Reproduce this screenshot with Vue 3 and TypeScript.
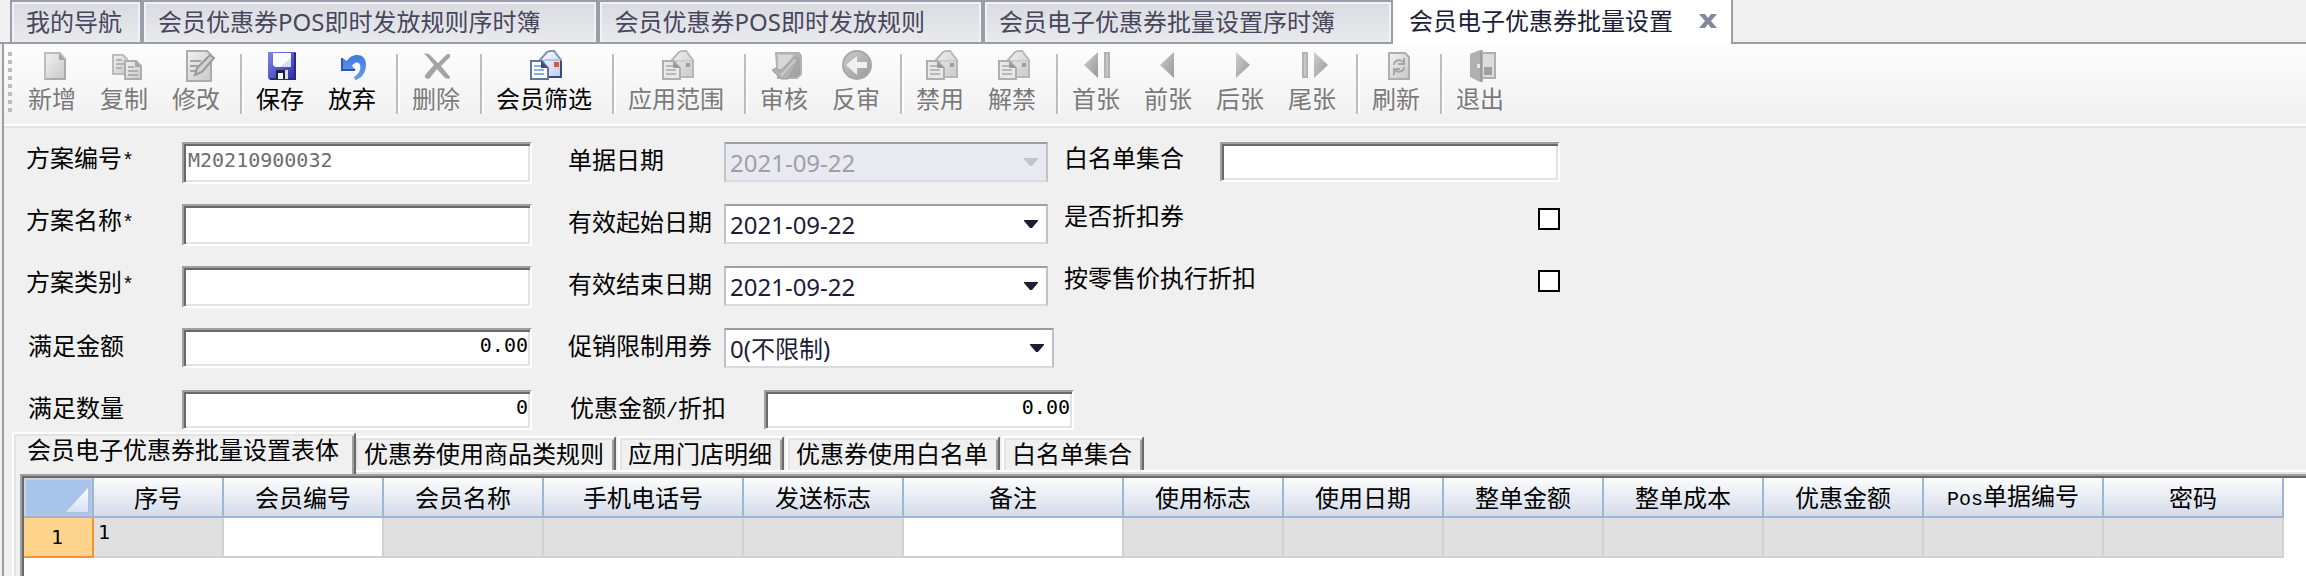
<script setup lang="ts">
import { ref } from 'vue'

type IconName =
  | 'page' | 'copy' | 'edit' | 'save' | 'undo' | 'delete' | 'mail'
  | 'approve' | 'revert' | 'first' | 'prev' | 'next' | 'last' | 'refresh' | 'exit'

interface Tool {
  label: string
  icon: IconName
  enabled?: boolean
}

interface Column {
  title: string
  width: number
  editable?: boolean
  value?: string
  code?: string
}

const documents = [
  '我的导航',
  '会员优惠券POS即时发放规则序时簿',
  '会员优惠券POS即时发放规则',
  '会员电子优惠券批量设置序时簿',
]

const toolGroups: Tool[][] = [
  [
    { label: '新增', icon: 'page' },
    { label: '复制', icon: 'copy' },
    { label: '修改', icon: 'edit' },
  ],
  [
    { label: '保存', icon: 'save', enabled: true },
    { label: '放弃', icon: 'undo', enabled: true },
  ],
  [{ label: '删除', icon: 'delete' }],
  [{ label: '会员筛选', icon: 'mail', enabled: true }],
  [{ label: '应用范围', icon: 'mail' }],
  [
    { label: '审核', icon: 'approve' },
    { label: '反审', icon: 'revert' },
  ],
  [
    { label: '禁用', icon: 'mail' },
    { label: '解禁', icon: 'mail' },
  ],
  [
    { label: '首张', icon: 'first' },
    { label: '前张', icon: 'prev' },
    { label: '后张', icon: 'next' },
    { label: '尾张', icon: 'last' },
  ],
  [{ label: '刷新', icon: 'refresh' }],
  [{ label: '退出', icon: 'exit' }],
]

const form = ref({
  code: 'M20210900032',
  name: '',
  category: '',
  amount: '0.00',
  quantity: '0',
  discount: '0.00',
  whitelist: '',
  isDiscount: false,
  byRetail: false,
})

const detailTabs = [
  '会员电子优惠券批量设置表体',
  '优惠券使用商品类规则',
  '应用门店明细',
  '优惠券使用白名单',
  '白名单集合',
]
const activeTab = ref(0)

const columns: Column[] = [
  { title: '序号', width: 130, value: '1' },
  { title: '会员编号', width: 160, editable: true },
  { title: '会员名称', width: 160 },
  { title: '手机电话号', width: 200 },
  { title: '发送标志', width: 160 },
  { title: '备注', width: 220, editable: true },
  { title: '使用标志', width: 160 },
  { title: '使用日期', width: 160 },
  { title: '整单金额', width: 160 },
  { title: '整单成本', width: 160 },
  { title: '优惠金额', width: 160 },
  { title: '单据编号', width: 180, code: 'Pos' },
  { title: '密码', width: 180 },
]
</script>

<template>
  <div class="app">
    <svg class="defs" width="0" height="0" aria-hidden="true">
      <defs>
        <linearGradient id="g-gray" x1="0" y1="0" x2="1" y2="1">
          <stop offset="0" stop-color="#f2f2f2" />
          <stop offset="1" stop-color="#c8c8c8" />
        </linearGradient>
        <linearGradient id="g-dark" x1="0" y1="0" x2="1" y2="1">
          <stop offset="0" stop-color="#cecece" />
          <stop offset="1" stop-color="#989898" />
        </linearGradient>
        <linearGradient id="g-save" x1="0" y1="0" x2="1" y2="1">
          <stop offset="0" stop-color="#7d86ee" />
          <stop offset="1" stop-color="#2f2a9c" />
        </linearGradient>
        <linearGradient id="g-mail" x1="0" y1="0" x2="1" y2="1">
          <stop offset="0" stop-color="#ffffff" />
          <stop offset="1" stop-color="#b9cdf0" />
        </linearGradient>
        <linearGradient id="g-undo" x1="0" y1="0" x2="0" y2="1">
          <stop offset="0" stop-color="#3f7ae0" />
          <stop offset="1" stop-color="#6d9df0" />
        </linearGradient>
        <linearGradient id="g-corner" x1="0" y1="0" x2="0" y2="1">
          <stop offset="0" stop-color="#ffffff" />
          <stop offset="1" stop-color="#d4e1f4" />
        </linearGradient>
      </defs>
    </svg>

    <nav class="documents">
      <button v-for="doc in documents" :key="doc" type="button" class="doc">{{ doc }}</button>
      <div class="doc current">
        <span>会员电子优惠券批量设置</span>
        <button type="button" class="close" aria-label="关闭">
          <svg width="18" height="14" viewBox="0 0 18 14">
            <path d="M0 0h6l3 4 3-4h6l-6 7 6 7h-6l-3-4-3 4H0l6-7z" fill="#85879a" />
          </svg>
        </button>
      </div>
      <div class="rest"></div>
    </nav>

    <main class="window">
      <div class="toolbar" role="toolbar">
        <span class="grip"></span>
        <div v-for="(group, g) in toolGroups" :key="g" class="group">
          <button
            v-for="tool in group"
            :key="tool.label"
            type="button"
            class="tool"
            :disabled="!tool.enabled"
          >
            <svg class="icon" width="32" height="32" viewBox="0 0 32 32" aria-hidden="true">
              <g v-if="tool.icon === 'page'">
                <path d="M7 3h15l5 6v20H7z" fill="url(#g-gray)" stroke="#bcbcbc" stroke-width="2" />
                <path d="M21 3v7h6z" fill="#a5a5a5" />
                <path d="M27 10v19H8" fill="none" stroke="#ababab" stroke-width="2" />
              </g>
              <g v-else-if="tool.icon === 'copy'">
                <path d="M3 5h10l4 4v15H3z" fill="url(#g-gray)" stroke="#bcbcbc" stroke-width="2" />
                <path d="M6 10h6M6 14h8M6 18h6" stroke="#b4b4b4" stroke-width="2" />
                <path d="M15 11h11l5 5v13H15z" fill="url(#g-gray)" stroke="#adadad" stroke-width="2" />
                <path d="M25 11v6h6z" fill="#a5a5a5" />
                <path d="M18 17h6M18 21h10M18 25h10" stroke="#b0b0b0" stroke-width="2" />
              </g>
              <g v-else-if="tool.icon === 'edit'">
                <path d="M5 1h20l4 4v26H5z" fill="url(#g-gray)" stroke="#acacac" stroke-width="2" />
                <path d="M8 11h11M8 16h8M8 21h6" stroke="#a4a4a4" stroke-width="2" />
                <path d="M28 5l4 3-12 14-7 3 2-7z" fill="#d2d2d2" stroke="#999999" stroke-width="2" />
              </g>
              <g v-else-if="tool.icon === 'save'">
                <path d="M2 2h28v28H4l-2-2z" fill="url(#g-save)" />
                <path d="M29 3v26H4" fill="none" stroke="#2c2790" stroke-width="2" />
                <path d="M7 3h18v14H9l-2-2z" fill="#fbfcff" />
                <path d="M25 8v9H14z" fill="#d5def8" />
                <path d="M10 20h12v9H10z" fill="#d9dce6" />
                <path d="M10 20h9v9h-9z" fill="#1d2438" />
                <path d="M12 23h5v6h-5z" fill="#f4f6fb" />
              </g>
              <g v-else-if="tool.icon === 'undo'">
                <path
                  d="M4 8l5 3c4-8 19-9 19 4 0 8-5 14-11 15l-1-3c6-4 7-8 6-12-1-4-6-3-8 1l4 4H4z"
                  fill="url(#g-undo)"
                />
                <path d="M4 8v12h13" fill="none" stroke="#2b55c0" stroke-width="2" />
              </g>
              <g v-else-if="tool.icon === 'delete'">
                <path
                  d="M2 3l5 1 9 9 9-9 3 0v3l-9 9 9 11-1 2-4-1-8-9-8 10-4-1 0-3 9-10z"
                  fill="#a4a4a4"
                />
              </g>
              <g v-else-if="tool.icon === 'mail' && tool.enabled">
                <path d="M9 11l8-9 3-1h4l7 9v17H9z" fill="url(#g-mail)" stroke="#7c93b8" stroke-width="2" />
                <path d="M9 11l9-1 12 0" fill="none" stroke="#b4c6e4" stroke-width="2" />
                <path d="M31 11v16H18" fill="none" stroke="#394d78" stroke-width="2" />
                <path d="M24 12h5v5h-5z" fill="#e5532b" />
                <path d="M1 11h11l6 7v11H1z" fill="#ffffff" stroke="#5f779f" stroke-width="2" />
                <path d="M11 11v7h7z" fill="#394d78" />
                <path d="M4 16h7M4 20h10M4 24h10" stroke="#8fb0e4" stroke-width="2" />
              </g>
              <g v-else-if="tool.icon === 'mail'">
                <path d="M9 11l8-9 3-1h4l7 9v17H9z" fill="url(#g-gray)" stroke="#b8b8b8" stroke-width="2" />
                <path d="M9 11h21" fill="none" stroke="#cdcdcd" stroke-width="2" />
                <path d="M24 13h4v4h-4z" fill="#9f9f9f" />
                <path d="M1 11h11l6 7v11H1z" fill="#e9e9e9" stroke="#b0b0b0" stroke-width="2" />
                <path d="M11 11v7h7z" fill="#9b9b9b" />
                <path d="M4 16h7M4 20h10M4 24h10" stroke="#b8b8b8" stroke-width="2" />
              </g>
              <g v-else-if="tool.icon === 'approve'">
                <path d="M6 3h23l2 3v18l-4 4H8z" fill="url(#g-dark)" stroke="#b2b2b2" stroke-width="2" />
                <path d="M8 5h16L13 19H8z" fill="#d8d8d8" />
                <path d="M2 20l4-2 4 3L25 7l4 2-11 20h-7z" fill="#b2b2b2" stroke="#9c9c9c" />
                <path d="M11 26L25 10" stroke="#c9c9c9" stroke-width="2" />
              </g>
              <g v-else-if="tool.icon === 'revert'">
                <circle cx="15" cy="15" r="14" fill="url(#g-dark)" stroke="#a8a8a8" stroke-width="2" />
                <path d="M4 15L15 6v6h10v6H15v7z" fill="#f0f0f0" />
              </g>
              <g v-else-if="tool.icon === 'first'">
                <path d="M16 2v26L2 15z" fill="url(#g-dark)" />
                <path d="M23 3h4v24h-4z" fill="#c8c8c8" stroke="#b2b2b2" stroke-width="2" />
              </g>
              <g v-else-if="tool.icon === 'prev'">
                <path d="M20 2v26L6 15z" fill="url(#g-dark)" />
              </g>
              <g v-else-if="tool.icon === 'next'">
                <path d="M10 2v26l14-13z" fill="url(#g-dark)" />
              </g>
              <g v-else-if="tool.icon === 'last'">
                <path d="M5 3h4v24H5z" fill="#c8c8c8" stroke="#b2b2b2" stroke-width="2" />
                <path d="M16 2v26l14-13z" fill="url(#g-dark)" />
              </g>
              <g v-else-if="tool.icon === 'refresh'">
                <path d="M7 3h16l4 4v22H7z" fill="url(#g-gray)" stroke="#afafaf" stroke-width="2" />
                <path
                  d="M12 15c0-5 6-6 9-3M22 8v6h-6M22 17c0 5-6 6-9 3M12 25v-6h6"
                  fill="none"
                  stroke="#a6a6a6"
                  stroke-width="2"
                />
              </g>
              <g v-else>
                <path d="M16 3h13v25H16z" fill="#dcdcdc" stroke="#b0b0b0" stroke-width="2" />
                <path d="M18 17h8v8h-8z" fill="#a0a0a0" />
                <path d="M4 4l10-4h3v32h-3L4 27z" fill="#b0b0b0" />
                <path d="M15 1v30" stroke="#9c9c9c" stroke-width="2" />
                <path d="M11 14h3v4h-3z" fill="#e8e8e8" />
              </g>
            </svg>
            <span>{{ tool.label }}</span>
          </button>
        </div>
      </div>

      <form class="fields" @submit.prevent>
        <div class="col first">
          <div class="row">
            <label for="code">方案编号<span class="mono">*</span></label>
            <input id="code" v-model="form.code" class="box" type="text" disabled />
          </div>
          <div class="row">
            <label for="name">方案名称<span class="mono">*</span></label>
            <input id="name" v-model="form.name" class="box" type="text" />
          </div>
          <div class="row">
            <label for="category">方案类别<span class="mono">*</span></label>
            <input id="category" v-model="form.category" class="box" type="text" />
          </div>
          <div class="row low">
            <label for="amount">满足金额</label>
            <input id="amount" v-model="form.amount" class="box number" type="text" />
          </div>
          <div class="row low">
            <label for="quantity">满足数量</label>
            <input id="quantity" v-model="form.quantity" class="box number" type="text" />
          </div>
        </div>

        <div class="col second">
          <div class="row">
            <label for="billDate">单据日期</label>
            <div class="drop">
              <select id="billDate" disabled><option>2021-09-22</option></select>
              <svg class="arrow" width="14" height="8" viewBox="0 0 14 8"><path d="M0 0h14v1L8 8H6L0 1z" /></svg>
            </div>
          </div>
          <div class="row">
            <label for="startDate">有效起始日期</label>
            <div class="drop">
              <select id="startDate"><option>2021-09-22</option></select>
              <svg class="arrow" width="14" height="8" viewBox="0 0 14 8"><path d="M0 0h14v1L8 8H6L0 1z" /></svg>
            </div>
          </div>
          <div class="row">
            <label for="endDate">有效结束日期</label>
            <div class="drop">
              <select id="endDate"><option>2021-09-22</option></select>
              <svg class="arrow" width="14" height="8" viewBox="0 0 14 8"><path d="M0 0h14v1L8 8H6L0 1z" /></svg>
            </div>
          </div>
          <div class="row">
            <label for="limit">促销限制用券</label>
            <div class="drop wide">
              <select id="limit"><option>0(不限制)</option></select>
              <svg class="arrow" width="14" height="8" viewBox="0 0 14 8"><path d="M0 0h14v1L8 8H6L0 1z" /></svg>
            </div>
          </div>
          <div class="row">
            <label for="discount" class="long">优惠金额<span class="mono">/</span>折扣</label>
            <input id="discount" v-model="form.discount" class="box number short" type="text" />
          </div>
        </div>

        <div class="col third">
          <div class="row">
            <label for="whitelist">白名单集合</label>
            <input id="whitelist" v-model="form.whitelist" class="box low-box" type="text" />
          </div>
          <div class="row check">
            <label for="isDiscount">是否折扣券</label>
            <input id="isDiscount" v-model="form.isDiscount" type="checkbox" />
          </div>
          <div class="row check">
            <label for="byRetail">按零售价执行折扣</label>
            <input id="byRetail" v-model="form.byRetail" type="checkbox" />
          </div>
        </div>
      </form>

      <section class="details">
        <div class="tabs" role="tablist">
          <button
            v-for="(tab, i) in detailTabs"
            :key="tab"
            type="button"
            role="tab"
            class="tab"
            :class="{ active: i === activeTab }"
            :aria-selected="i === activeTab"
            @click="activeTab = i"
          >
            {{ tab }}
          </button>
        </div>
        <div class="sheet" role="tabpanel">
          <div class="grid">
            <table>
              <colgroup>
                <col class="index-col" />
                <col v-for="c in columns" :key="c.title" :style="{ width: c.width + 'px' }" />
              </colgroup>
              <thead>
                <tr>
                  <th class="corner">
                    <svg width="22" height="24" viewBox="0 0 22 24" aria-hidden="true">
                      <path d="M22 0v24H0z" fill="url(#g-corner)" />
                    </svg>
                  </th>
                  <th v-for="c in columns" :key="c.title" scope="col">
                    <span v-if="c.code" class="mono">{{ c.code }}</span>{{ c.title }}
                  </th>
                </tr>
              </thead>
              <tbody>
                <tr>
                  <th scope="row" class="index">1</th>
                  <td v-for="c in columns" :key="c.title" :class="{ editable: c.editable }">{{ c.value }}</td>
                </tr>
              </tbody>
            </table>
          </div>
        </div>
      </section>
    </main>
  </div>
</template>

<style>
html,
body {
  margin: 0;
  background: #f0f0f0;
}
</style>

<style scoped>
.app {
  display: flex;
  flex-direction: column;
  min-height: 100vh;
  overflow: hidden;
  background: #f0f0f0;
  color: #000;
  font-family: "Noto Sans CJK SC", sans-serif;
  font-size: 24px;
}
.app *,
.app *::before {
  box-sizing: border-box;
}
.defs {
  position: absolute;
}
button,
input,
select {
  margin: 0;
  font: inherit;
  color: inherit;
}

/* document tabs */
.documents {
  display: flex;
  height: 44px;
  padding-left: 10px;
  color: #48465c;
  font-family: "Noto Sans", "Noto Sans CJK SC", sans-serif;
  white-space: nowrap;
  box-shadow: inset 0 -2px 0 #9b9dab;
}
.doc {
  flex: none;
  padding: 0 56px 0 14px;
  border: 2px solid #9b9dab;
  background: linear-gradient(#dadbe0, #e9eaee);
  box-shadow: inset 2px 2px 0 #f2f2f5, inset -2px 0 0 #f2f2f5;
  line-height: 40px;
  text-align: left;
}
.doc:first-child {
  padding-right: 18px;
}
.doc.current {
  display: flex;
  align-items: center;
  gap: 26px;
  padding: 0 14px 2px 16px;
  border: 0;
  background: #fff;
  box-shadow: none;
  color: #201c38;
}
.close {
  display: flex;
  padding: 0;
  border: 0;
  background: none;
}
.rest {
  flex: 1;
  border-left: 2px solid #9b9dab;
  border-bottom: 2px solid #9b9dab;
}

/* window body */
.window {
  flex: 1;
  display: flex;
  flex-direction: column;
  margin-left: 2px;
  border-left: 2px solid #9b9dab;
}
.toolbar {
  display: flex;
  min-height: 84px;
  border-bottom: 2px solid #e2e2e2;
  background: linear-gradient(#fdfdfd, #f0f0f0);
  box-shadow: inset 0 -2px 0 #fff;
}
.grip {
  width: 4px;
  height: 64px;
  margin: 8px 4px 0;
  background: repeating-linear-gradient(#bcbcbc 0 4px, transparent 4px 8px);
}
.group {
  display: flex;
}
.group + .group::before {
  content: "";
  width: 4px;
  height: 60px;
  margin: 10px 0 0 8px;
  border-left: 2px solid #bdbdbd;
  border-right: 2px solid #fff;
}
.tool {
  display: flex;
  flex-direction: column;
  align-items: center;
  gap: 4px;
  padding: 6px 12px 0;
  border: 0;
  background: none;
  line-height: 24px;
  white-space: nowrap;
}
.tool:disabled {
  color: #7a7a7a;
}
.icon {
  margin-left: 4px;
  overflow: visible;
}

/* form */
.fields {
  display: flex;
  align-items: flex-start;
  padding: 14px 0 0 22px;
}
.col {
  display: flex;
  flex-direction: column;
  gap: 20px;
}
.first {
  width: 506px;
}
.second {
  width: 480px;
  margin-left: 36px;
}
.third {
  width: 496px;
  margin-left: 16px;
}
.row {
  display: flex;
  align-items: flex-start;
  height: 42px;
}
label {
  flex: none;
  width: 156px;
  line-height: 30px;
  white-space: nowrap;
}
.second label,
.low label {
  line-height: 34px;
}
.low label {
  padding-left: 2px;
}
.second label.long {
  width: 196px;
  padding-left: 2px;
}
.box {
  width: 350px;
  height: 42px;
  padding: 0 2px 6px 4px;
  border: 2px solid;
  border-color: #a0a0a0 #fff #fff #a0a0a0;
  border-radius: 0;
  outline: 0;
  background: #fff;
  box-shadow: inset 2px 2px 0 #696969, inset -2px -2px 0 #e3e3e3;
  font-family: "DejaVu Sans Mono", monospace;
  font-size: 20px;
}
.box:disabled {
  color: #6d6d6d;
}
.low .box,
.short,
.low-box {
  height: 40px;
}
.number {
  text-align: right;
}
.short {
  flex: none;
  width: 310px;
}
.low-box {
  width: 340px;
}
.drop {
  position: relative;
  flex: none;
  width: 324px;
}
.drop.wide {
  width: 330px;
}
select {
  display: block;
  width: 100%;
  height: 40px;
  padding: 0 40px 0 4px;
  border: 2px solid;
  border-color: #9b9dab #bfc2cc #d9dade #bfc2cc;
  border-radius: 0;
  appearance: none;
  background: #fff;
  color: #201c38;
  font-family: "Noto Sans", "Noto Sans CJK SC", sans-serif;
}
select:disabled {
  background: #e9eaef;
  color: #a09eae;
  opacity: 1;
}
.arrow {
  position: absolute;
  top: 16px;
  right: 10px;
  fill: #201c38;
  pointer-events: none;
}
select:disabled + .arrow {
  fill: #c3c3c9;
}
.check {
  justify-content: space-between;
}
.check label {
  line-height: 22px;
}
.check input {
  width: 22px;
  height: 22px;
  margin-top: 4px;
  border: 2px solid #000;
  appearance: none;
  background: #fff;
}

/* detail tabs and grid */
.details {
  flex: 1;
  display: flex;
  flex-direction: column;
  margin-left: 8px;
}
.tabs {
  display: flex;
  align-items: flex-end;
  gap: 2px;
  height: 38px;
}
.tab {
  height: 34px;
  padding: 0 10px 2px 8px;
  border: 0 solid;
  border-width: 2px 2px 0;
  border-color: #fff #696969 #fff #fff;
  border-radius: 2px 2px 0 0;
  background: #f0f0f0;
  box-shadow: inset 2px 2px 0 #e3e3e3, inset -2px 0 0 #a0a0a0;
  line-height: 30px;
  white-space: nowrap;
}
.tab.active {
  z-index: 1;
  height: 42px;
  padding: 0 15px 10px 13px;
  margin: 0 -4px -4px 0;
}
.sheet {
  flex: 1;
  display: flex;
  padding: 2px 0 0 6px;
  border: 0 solid #fff;
  border-width: 2px 0 0 2px;
  box-shadow: inset 2px 2px 0 #e3e3e3;
}
.grid {
  flex: 1;
  min-width: 0;
  padding: 2px 0 0 2px;
  border: 0 solid #a0a0a0;
  border-width: 2px 0 0 2px;
  background: #fff;
  box-shadow: inset 2px 2px 0 #696969;
}
table {
  width: 2260px;
  border-spacing: 0;
  table-layout: fixed;
}
.index-col {
  width: 70px;
}
th {
  height: 40px;
  padding: 0;
  border: 0 solid #9db7d2;
  border-width: 0 2px 2px 0;
  background: linear-gradient(#fbfcfd, #d4dce9);
  font-weight: 400;
  line-height: 32px;
  white-space: nowrap;
}
.corner {
  padding: 6px 4px 0 0;
  background: #a9c4e9;
  box-shadow: inset 2px 2px 0 #c5d5e8, inset -2px -2px 0 #b4c7dc;
  text-align: right;
}
.corner svg {
  display: block;
  margin-left: auto;
}
.mono {
  font-family: "Liberation Mono", monospace;
  font-size: 20px;
}
td,
.index {
  font-family: "DejaVu Sans Mono", monospace;
  font-size: 20px;
}
.index {
  padding-right: 2px;
  border-color: #f29536;
  background: #ffd58d;
}
td {
  height: 40px;
  padding: 2px 4px 0;
  border: 0 solid #d2d2d2;
  border-width: 0 2px 2px 0;
  background: #e0e0e0;
  line-height: 24px;
  vertical-align: top;
}
.editable {
  background: #fff;
}
</style>
